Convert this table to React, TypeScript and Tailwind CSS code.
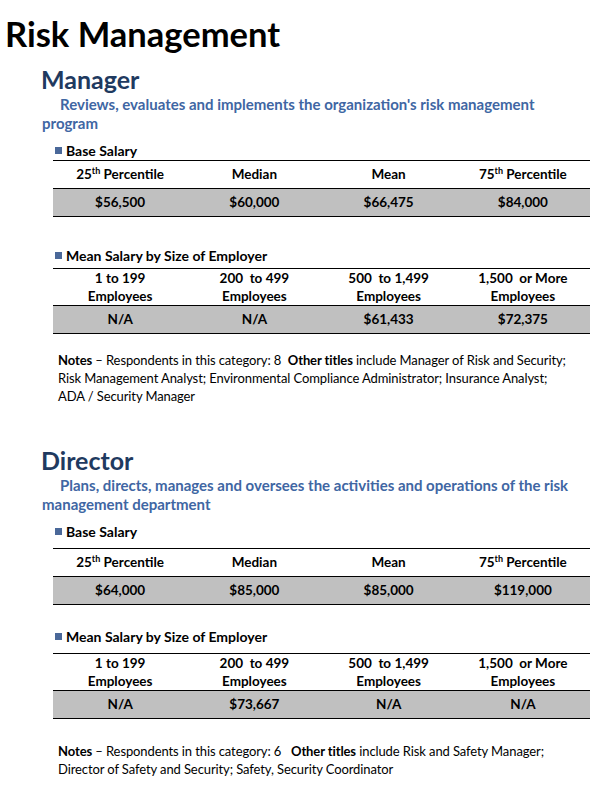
import React from 'react';

interface SizeCol {
  top: string;
  bottom: string;
}

interface SectionProps {
  title: string;
  description: string;
  base: string[];
  bySize: string[];
  notes: React.ReactNode;
  className?: string;
  baseGap: string;
  meanGap: string;
  sizeGap: string;
  notesGap: string;
}

const baseHeaders = ['25', 'Median', 'Mean', '75'];

const sizeHeaders: SizeCol[] = [
  { top: '1 to 199', bottom: 'Employees' },
  { top: '200  to 499', bottom: 'Employees' },
  { top: '500  to 1,499', bottom: 'Employees' },
  { top: '1,500  or More', bottom: 'Employees' }
];

const Bullet: React.FC<{ label: string }> = ({ label }) => (
  <div className="flex items-center ml-[55px] h-[16px]">
    <span className="w-[7px] h-[7px] bg-[#4a6899] mr-[4px]"></span>
    <span className="text-[14px] font-bold text-black">{label}</span>
  </div>
);

const Percentile: React.FC<{ n: string }> = ({ n }) => (
  <span>
    {n}
    <sup className="text-[9px] -top-[0.6em]">th</sup> Percentile
  </span>
);

const Section: React.FC<SectionProps> = ({
  title,
  description,
  base,
  bySize,
  notes,
  className,
  baseGap,
  meanGap,
  sizeGap,
  notesGap
}) => (
  <div className={className}>
    <h2 className="ml-[41px] text-[25px] leading-[30px] font-bold text-[#1f3a60]">{title}</h2>
    <p className="ml-[42px] mr-[33px] text-[15px] leading-[19px] font-bold text-[#4066a3] mt-[1px]">
      <span className="inline-block w-[18px]"></span>
      {description}
    </p>

    <div className="mt-[9px]">
      <Bullet label="Base Salary" />
    </div>
    {/* base salary table */}
    <div className={`ml-[53px] w-[537px] ${baseGap} border-t-[1.5px] border-black text-[13.5px] font-bold text-black`}>
      <div className="grid grid-cols-4 h-[28px] items-center text-center border-b-[1.5px] border-black">
        {baseHeaders.map((h) => (
          <div key={h}>{h === 'Median' || h === 'Mean' ? h : <Percentile n={h} />}</div>
        ))}
      </div>
      <div className="grid grid-cols-4 h-[28px] items-center text-center bg-[#c0c0c0] border-b-[1.5px] border-black">
        {base.map((v, i) => (
          <div key={i}>{v}</div>
        ))}
      </div>
    </div>

    <div className={meanGap}>
      <Bullet label="Mean Salary by Size of Employer" />
    </div>
    <div className={`ml-[53px] w-[537px] ${sizeGap} border-t-[1.5px] border-black text-[13.5px] font-bold text-black`}>
      <div className="grid grid-cols-4 h-[37px] items-center text-center leading-[18px] border-b-[1.5px] border-black">
        {sizeHeaders.map((h) => (
          <div key={h.top} className="whitespace-pre">
            {h.top}
            <br />
            {h.bottom}
          </div>
        ))}
      </div>
      <div className="grid grid-cols-4 h-[28px] items-center text-center bg-[#c0c0c0] border-b-[1.5px] border-black">
        {bySize.map((v, i) => (
          <div key={i}>{v}</div>
        ))}
      </div>
    </div>

    <p className={`ml-[58px] ${notesGap} text-[13px] leading-[18px] tracking-[-0.1px] whitespace-nowrap text-black`}>
      {notes}
    </p>
  </div>
);

export default function App() {
  return (
    <div className="w-[613px] h-[806px] bg-white overflow-hidden font-['Lato',sans-serif]">
      <h1 className="ml-[5px] pt-[14px] text-[34.5px] leading-[40px] font-bold text-black">Risk Management</h1>
      <Section
        className="mt-[10px]"
        baseGap="mt-[2px]"
        meanGap="mt-[30px]"
        sizeGap="mt-[5px]"
        notesGap="mt-[17px]"
        title="Manager"
        description="Reviews, evaluates and implements the organization's risk management program"
        base={['$56,500', '$60,000', '$66,475', '$84,000']}
        bySize={['N/A', 'N/A', '$61,433', '$72,375']}
        notes={
          <>
            <b>Notes</b> – Respondents in this category: 8&nbsp; <b>Other titles</b> include Manager of Risk and
            Security;
            <br />
            Risk Management Analyst; Environmental Compliance Administrator; Insurance Analyst;
            <br />
            ADA / Security Manager
          </>
        }
      />
      <Section
        className="mt-[40px]"
        baseGap="mt-[9px]"
        meanGap="mt-[23px]"
        sizeGap="mt-[9px]"
        notesGap="mt-[23px]"
        title="Director"
        description="Plans, directs, manages and oversees the activities and operations of the risk management department"
        base={['$64,000', '$85,000', '$85,000', '$119,000']}
        bySize={['N/A', '$73,667', 'N/A', 'N/A']}
        notes={
          <>
            <b>Notes</b> – Respondents in this category: 6 &nbsp; <b>Other titles</b> include Risk and Safety
            Manager;
            <br />
            Director of Safety and Security; Safety, Security Coordinator
          </>
        }
      />
    </div>
  );
}
